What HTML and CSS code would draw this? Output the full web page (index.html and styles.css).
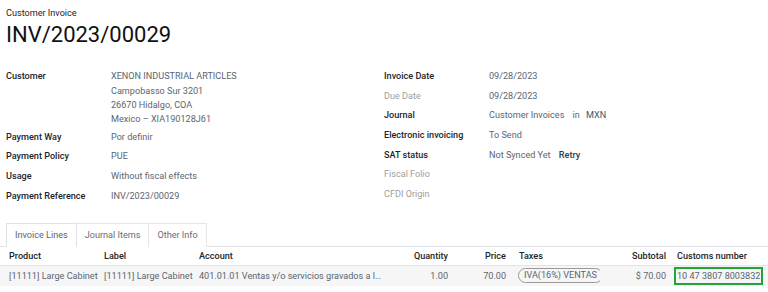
FILE: index.html
```html
<!DOCTYPE html>
<html>
<head>
<meta charset="utf-8">
<link rel="stylesheet" href="styles.css">
</head>
<body>
<div class="sheet">
  <div class="subtitle">Customer Invoice</div>
  <h1 class="title">INV/2023/00029</h1>

  <div class="groups">
    <div class="group left">
      <div class="row tight">
        <div class="label">Customer</div>
        <div class="value address">
          <div class="first-line">XENON INDUSTRIAL ARTICLES</div>
          <div>Campobasso Sur 3201</div>
          <div>26670 Hidalgo, COA</div>
          <div>Mexico – XIA190128J61</div>
        </div>
      </div>
      <div class="row"><div class="label">Payment Way</div><div class="value">Por definir</div></div>
      <div class="row"><div class="label">Payment Policy</div><div class="value">PUE</div></div>
      <div class="row"><div class="label">Usage</div><div class="value">Without fiscal effects</div></div>
      <div class="row"><div class="label">Payment Reference</div><div class="value">INV/2023/00029</div></div>
    </div>
    <div class="group right">
      <div class="row"><div class="label">Invoice Date</div><div class="value">09/28/2023</div></div>
      <div class="row"><div class="label muted">Due Date</div><div class="value">09/28/2023</div></div>
      <div class="row"><div class="label">Journal</div><div class="value">Customer Invoices <span class="in">in</span> <span class="cur">MXN</span></div></div>
      <div class="row"><div class="label">Electronic invoicing</div><div class="value">To Send</div></div>
      <div class="row"><div class="label">SAT status</div><div class="value">Not Synced Yet <span class="retry">Retry</span></div></div>
      <div class="row"><div class="label muted">Fiscal Folio</div><div class="value"></div></div>
      <div class="row"><div class="label muted">CFDI Origin</div><div class="value"></div></div>
    </div>
  </div>

  <div class="tabs">
    <div class="tab active">Invoice Lines</div>
    <div class="tab">Journal Items</div>
    <div class="tab">Other Info</div>
  </div>

  <table class="lines">
    <colgroup>
      <col class="c-product">
      <col class="c-label">
      <col class="c-account">
      <col class="c-qty">
      <col class="c-price">
      <col class="c-taxes">
      <col class="c-sub">
      <col class="c-customs">
    </colgroup>
    <thead>
      <tr>
        <th class="first">Product</th>
        <th>Label</th>
        <th>Account</th>
        <th class="num">Quantity</th>
        <th class="num">Price</th>
        <th class="taxes">Taxes</th>
        <th class="num">Subtotal</th>
        <th class="customs">Customs number</th>
      </tr>
    </thead>
    <tbody>
      <tr>
        <td class="first">[11111] Large Cabinet</td>
        <td>[11111] Large Cabinet</td>
        <td>401.01.01 Ventas y/o servicios gravados a l…</td>
        <td class="num">1.00</td>
        <td class="num">70.00</td>
        <td class="taxes"><span class="badge">IVA(16%) VENTAS</span></td>
        <td class="num">$ 70.00</td>
        <td class="customs"><span class="hl">10 47 3807 8003832</span></td>
      </tr>
    </tbody>
  </table>
</div>
</body>
</html>
```

FILE: styles.css
```css
html, body {
  margin: 0;
  padding: 0;
  background: #ffffff;
}
body {
  font-family: Roboto, "Liberation Sans", sans-serif;
  font-size: 9.1px;
  color: #212529;
  width: 768px;
  height: 292px;
  overflow: hidden;
}
.sheet {
  padding-top: 7px;
}
.subtitle {
  padding-left: 6px;
  line-height: 12px;
  color: #212529;
}
.title {
  margin: 0;
  padding-left: 6px;
  font-size: 22px;
  font-weight: 400;
  line-height: 26px;
  margin-top: 3px;
  color: #111111;
}
.groups {
  display: flex;
  margin-top: 18px;
}
.group {
  box-sizing: border-box;
  width: 384px;
}
.group.left {
  padding-left: 6px;
}
.row {
  display: flex;
  padding: 2.85px 0;
  line-height: 14px;
}
.row.tight {
  padding-bottom: 1px;
}
.address .first-line {
  margin-bottom: 1px;
}
.label {
  width: 105px;
  flex: none;
  font-weight: 500;
  color: #212529;
}
.label.muted {
  color: #a0a0a0;
  font-weight: 400;
}
.value {
  color: #5b6570;
  min-height: 14px;
}
.value .in {
  margin: 0 4px 0 6px;
}
.value .cur {
  color: #42566b;
}
.value .retry {
  margin-left: 6px;
  color: #233c5a;
  font-weight: 500;
}
.tabs {
  display: flex;
  margin-top: 17px;
  padding-left: 6px;
  border-bottom: 1px solid #dee2e6;
}
.tab {
  border: 1px solid #e6e6e6;
  border-bottom: none;
  border-left: none;
  padding: 0 8px;
  line-height: 22px;
  color: #666e76;
  margin-bottom: -1px;
  background: #ffffff;
}
.tab.active {
  border: 1px solid #dee2e6;
  border-bottom: 1px solid #ffffff;
  color: #5b6570;
  padding: 0 8px 0 8px;
}
.lines {
  width: 768px;
  border-collapse: collapse;
  table-layout: fixed;
}
.c-product { width: 101px; }
.c-label { width: 95px; }
.c-account { width: 192px; }
.c-qty { width: 63px; }
.c-price { width: 58px; }
.c-taxes { width: 91px; }
.c-sub { width: 69px; }
.c-customs { width: 99px; }
.lines th, .lines td {
  padding: 0 3px;
  text-align: left;
  white-space: nowrap;
  overflow: hidden;
}
.lines th {
  font-weight: 500;
  color: #212529;
  height: 18px;
  border-bottom: 1px solid #e4e4e4;
}
.lines td {
  height: 20px;
  color: #5b6570;
  background: #f6f6f6;
}
.lines .first {
  padding-left: 9px;
}
.lines .num {
  text-align: right;
}
.lines .taxes {
  padding-left: 10px;
}
.lines td.taxes {
  padding-left: 9px;
}
.lines th.customs {
  padding-left: 8px;
}
.lines td.customs {
  padding-left: 5px;
  padding-right: 0;
  overflow: visible;
}
.badge {
  display: inline-block;
  border: 1px solid #9a9a9a;
  border-radius: 8px;
  padding: 0 5px;
  line-height: 13px;
  color: #5b6570;
}
.hl {
  display: inline-block;
  border: 2px solid #22a638;
  padding: 0 1px;
  line-height: 14px;
}
```
